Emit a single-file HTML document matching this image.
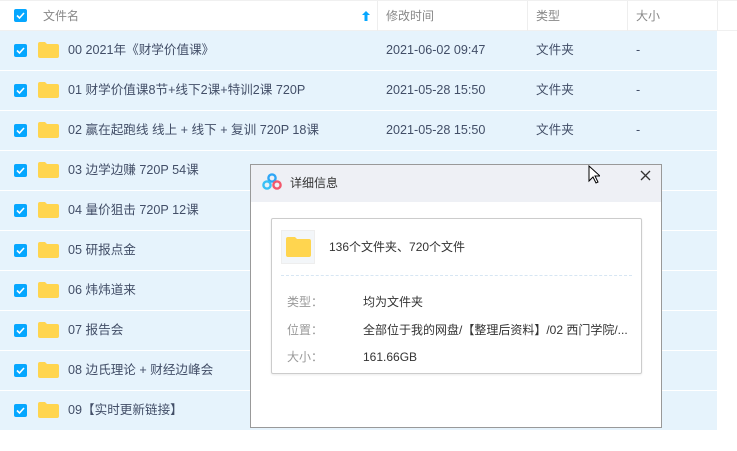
<!DOCTYPE html>
<html><head><meta charset="utf-8"><style>
*{margin:0;padding:0;box-sizing:border-box}
body{width:737px;height:451px;background:#fff;font-family:"Liberation Sans","Noto Sans CJK SC",sans-serif;font-size:12px;color:#424e67;position:relative;overflow:hidden}
span{line-height:16px;white-space:nowrap}
.hdr{position:absolute;left:0;top:0;width:737px;height:31px;border-top:1px solid #f0f0f0;border-bottom:1px solid #f0f0f0;color:#888}
.hdr span{position:absolute;top:7px}
.vs{position:absolute;top:0;width:1px;height:30px;background:#eee}
.row{position:absolute;left:0;width:717px;height:39px;background:#e6f3fc;font-size:12.6px}
.row span{position:absolute;top:11px;color:#424e67}
.cb{position:absolute;left:14px;top:13px;width:13px;height:13px;border-radius:2px;background:#06a7ff}
.cb svg{position:absolute;left:0;top:0}
.fd{position:absolute;left:38px;top:11px;width:21px;height:16px}
.dlg{position:absolute;left:250px;top:164px;width:412px;height:264px;background:#fff;border:1px solid #999}
.dh{height:37px;background:#eef0f5;position:relative}
.box{position:absolute;left:20px;top:53px;width:371px;height:156px;border:1px solid #ccc;border-radius:2px;box-shadow:0 1px 2px rgba(0,0,0,.08)}
</style></head><body>
<div class="hdr">
<div class="cb" style="top:8px"><svg width="13" height="13"><path d="M3 6.5l2.5 2.5 4.5-5" stroke="#fff" stroke-width="1.6" fill="none"/></svg></div>
<span style="left:43px">文件名</span>
<svg style="position:absolute;left:362px;top:10px" width="8" height="10"><path d="M4 0L0 4h2.5v6h3V4H8z" fill="#06a7ff"/></svg>
<div class="vs" style="left:377px"></div><span style="left:386px">修改时间</span>
<div class="vs" style="left:527px"></div><span style="left:536px">类型</span>
<div class="vs" style="left:627px"></div><span style="left:636px">大小</span>
<div class="vs" style="left:717px"></div>
</div>
<div id="rows"></div>
<script>
var r=[["00 2021年《财学价值课》","2021-06-02 09:47"],["01 财学价值课8节+线下2课+特训2课 720P","2021-05-28 15:50"],["02 赢在起跑线 线上 + 线下 + 复训 720P 18课","2021-05-28 15:50"],["03 边学边赚 720P 54课",""],["04 量价狙击 720P 12课",""],["05 研报点金",""],["06 炜炜道来",""],["07 报告会",""],["08 边氏理论 + 财经边峰会",""],["09【实时更新链接】",""]];
var h="";r.forEach(function(x,i){var y=31+i*40;h+='<div class="row" style="top:'+y+'px"><div class="cb"><svg width="13" height="13"><path d="M3 6.5l2.5 2.5 4.5-5" stroke="#fff" stroke-width="1.6" fill="none"/></svg></div><svg class="fd" viewBox="0 0 21 16"><path d="M0 2a2 2 0 0 1 2-2h5l2 2h10a2 2 0 0 1 2 2v10a2 2 0 0 1-2 2H2a2 2 0 0 1-2-2z" fill="#ffd54f"/></svg><span style="left:68px">'+x[0]+'</span>'+(x[1]?'<span style="left:386px">'+x[1]+'</span><span style="left:536px">文件夹</span><span style="left:636px">-</span>':'')+'</div>';});
document.getElementById("rows").innerHTML=h;
</script>
<div class="dlg">
<div class="dh">
<svg style="position:absolute;left:11px;top:8px" width="20" height="17"><circle cx="10" cy="5" r="3.6" fill="none" stroke="#2fa6f6" stroke-width="2.4"/><circle cx="5" cy="12" r="3.6" fill="none" stroke="#38c1f5" stroke-width="2.4"/><circle cx="15" cy="12" r="3.6" fill="none" stroke="#f2576b" stroke-width="2.4"/></svg>
<span style="position:absolute;left:39px;top:10px;color:#333">详细信息</span>
<svg style="position:absolute;left:389px;top:5px" width="11" height="11"><path d="M1 1l9 9M10 1l-9 9" stroke="#333" stroke-width="1.3"/></svg>
</div>
<div class="box">
<div style="position:absolute;left:9px;top:11px;width:34px;height:34px;border:1px solid #eee;background:#f3f6f9"><svg style="position:absolute;left:4px;top:6px" width="25" height="20"><path d="M0 2a2 2 0 0 1 2-2h7l2 2h12a2 2 0 0 1 2 2v14a2 2 0 0 1-2 2H2a2 2 0 0 1-2-2z" fill="#ffd54f"/></svg></div>
<span style="position:absolute;left:57px;top:20px;color:#333">136个文件夹、720个文件</span>
<div style="position:absolute;left:9px;right:9px;top:56px;border-top:1px dashed #d7e6f3"></div>
<span style="position:absolute;left:15px;top:75px;color:#999">类型：</span><span style="position:absolute;left:91px;top:75px;color:#333">均为文件夹</span>
<span style="position:absolute;left:15px;top:103px;color:#999">位置：</span><span style="position:absolute;left:91px;top:103px;color:#333">全部位于我的网盘/【整理后资料】/02 西门学院/...</span>
<span style="position:absolute;left:15px;top:130px;color:#999">大小：</span><span style="position:absolute;left:91px;top:130px;color:#333">161.66GB</span>
</div>
</div>
<svg style="position:absolute;left:588px;top:165px" width="12" height="19"><path d="M1 1v15l4-4 3 6 2-1-3-6h5z" fill="#fff" stroke="#000"/></svg>
</body></html>
